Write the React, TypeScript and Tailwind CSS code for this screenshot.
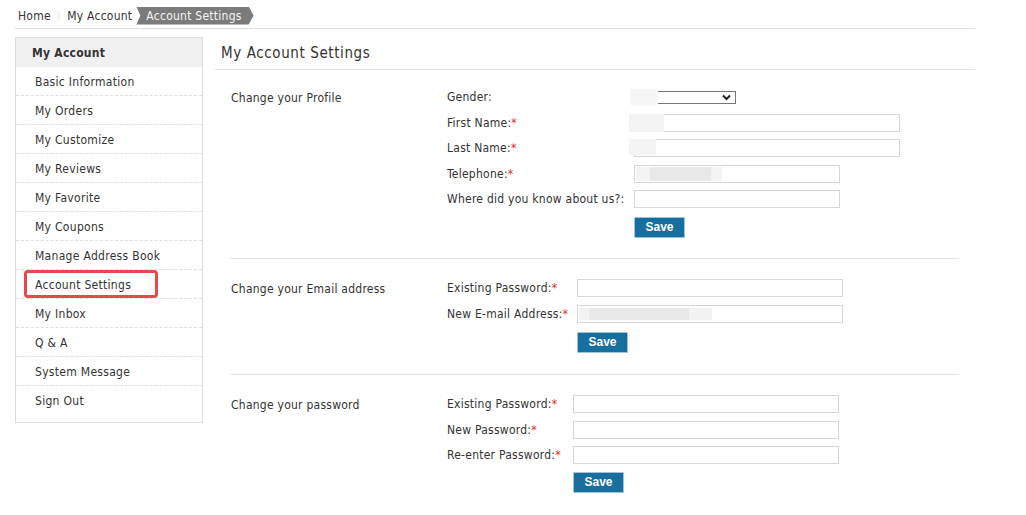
import React from "react";

const FONT = { fontFamily: '"DejaVu Sans Condensed", "DejaVu Sans", Tahoma, sans-serif' };

const sideItems = [
  "Basic Information",
  "My Orders",
  "My Customize",
  "My Reviews",
  "My Favorite",
  "My Coupons",
  "Manage Address Book",
  "Account Settings",
  "My Inbox",
  "Q & A",
  "System Message",
  "Sign Out",
];

function Star() {
  return <span className="text-[#e02b2b]">*</span>;
}

function Blur({ className }: { className: string }) {
  return <span className={"pointer-events-none absolute " + className} />;
}

function TextInput({
  w,
  children,
}: {
  w: string;
  children?: React.ReactNode;
}) {
  return (
    <div className={"relative h-[18px] " + w}>
      <input
        type="text"
        className="block h-full w-full border border-[#d6d6d6] bg-white px-1 text-[12px] outline-none"
      />
      {children}
    </div>
  );
}

function SaveBtn() {
  return (
    <button
      className="block h-[21px] w-[51px] rounded-[1px] border border-[#9fc3d8] bg-[#176f9f] text-[12px] font-bold leading-[19px] text-white"
      style={{ fontFamily: '"Liberation Sans", Arial, sans-serif' }}
    >
      Save
    </button>
  );
}

type Row = { label: React.ReactNode; field: React.ReactNode };

function Section({
  title,
  labelW,
  rows,
  pt,
  pb,
  border,
  saveGap,
}: {
  title: string;
  labelW: string;
  rows: Row[];
  pt: string;
  pb: string;
  border: boolean;
  saveGap: string;
}) {
  return (
    <div className={"mx-[15px] mr-[17px] flex " + pt + " " + pb + (border ? " border-b border-[#e3e3e3]" : "")}>
      <div className="w-[217px] pl-[1px] pt-[1px] text-[12px] leading-[18px] tracking-[0.25px] text-[#333]">{title}</div>
      <div className="flex flex-col">
        <div className="flex flex-col gap-[7.6px]">
          {rows.map((r, i) => (
            <div key={i} className="flex h-[18px] items-center">
              <div className={"shrink-0 text-[12px] leading-[18px] tracking-[0.25px] text-[#333] " + labelW}>{r.label}</div>
              {r.field}
            </div>
          ))}
        </div>
        <div className={"flex " + saveGap}>
          <div className={"shrink-0 " + labelW} />
          <SaveBtn />
        </div>
      </div>
    </div>
  );
}

export default function App() {
  return (
    <div className="min-h-[515px] w-[1026px] bg-white text-[#333]" style={FONT}>
      <div className="ml-[15px] w-[960px]">
        {/* breadcrumb */}
        <div className="flex h-[29px] items-center border-b border-[#dcdcdc] pt-[3px] text-[12px] tracking-[0.25px]">
          <span className="ml-[3px] text-[#333]">Home</span>
          <span className="ml-[5px] mr-[1px] text-[10px] text-[#b0b0b0]">〉</span>
          <span className="text-[#333]">My Account</span>
          <span
            className="ml-[4px] flex h-[18px] items-center bg-[#7b7b7b] pl-[10px] pr-[12px] text-[#f4f4f4]"
            style={{
              clipPath:
                "polygon(0 0, calc(100% - 5px) 0, 100% 50%, calc(100% - 5px) 100%, 0 100%, 4px 50%)",
            }}
          >
            Account Settings
          </span>
        </div>

        <div className="mt-[8px] flex gap-[12px]">
          {/* sidebar */}
          <div className="relative h-[386px] w-[188px] shrink-0 border border-[#dddddd]">
            <div className="flex h-[29px] items-center bg-[#f0f0f0] pl-[16px] text-[12px] font-bold tracking-[0.25px] text-[#333]">
              My Account
            </div>
            {sideItems.map((it, i) => (
              <div
                key={it}
                className={
                  "flex h-[29px] items-center pl-[19px] pt-[1px] text-[12px] tracking-[0.3px] text-[#333] " +
                  (i < sideItems.length - 1 ? "border-b border-dashed border-[#dedede]" : "")
                }
              >
                {it}
              </div>
            ))}
            <div className="pointer-events-none absolute left-[8px] top-[232px] h-[28px] w-[134px] rounded-[4px] border-[3px] border-[#e5484d]" />
          </div>

          {/* main */}
          <div className="flex-1">
            <div className="flex h-[33px] items-center border-b border-[#e3e3e3] pl-[6px] text-[15px] tracking-[0.6px] text-[#333]">
              My Account Settings
            </div>

            <Section
              title="Change your Profile"
              labelW="w-[187px]"
              pt="pt-[18px]"
              pb="pb-[20px]"
              border
              saveGap="mt-[9px]"
              rows={[
                {
                  label: "Gender:",
                  field: (
                    <div className="relative">
                      <select className="block h-[13px] w-[102px] appearance-none border border-[#767676] bg-white text-[10px] outline-none">
                        <option></option>
                      </select>
                      <svg
                        className="pointer-events-none absolute right-[5px] top-[3px]"
                        width="9"
                        height="7"
                        viewBox="0 0 9 7"
                      >
                        <path d="M1 1.5 L4.5 5 L8 1.5" stroke="#222" strokeWidth="2" fill="none" />
                      </svg>
                      <Blur className="-left-[4px] -top-[2px] h-[16px] w-[28px] bg-[#f6f6f6]" />
                    </div>
                  ),
                },
                {
                  label: (
                    <>
                      First Name:<Star />
                    </>
                  ),
                  field: (
                    <TextInput w="w-[266px]">
                      <Blur className="-left-[5px] top-0 h-[18px] w-[35px] bg-[#f4f4f4]" />
                    </TextInput>
                  ),
                },
                {
                  label: (
                    <>
                      Last Name:<Star />
                    </>
                  ),
                  field: (
                    <TextInput w="w-[266px]">
                      <Blur className="-left-[5px] top-0 h-[16px] w-[27px] bg-[#f4f4f4]" />
                    </TextInput>
                  ),
                },
                {
                  label: (
                    <>
                      Telephone:<Star />
                    </>
                  ),
                  field: (
                    <TextInput w="w-[206px]">
                      <Blur className="left-[2px] top-[2px] h-[14px] w-[86px] bg-[#f3f3f3]" />
                      <Blur className="left-[16px] top-[2px] h-[14px] w-[61px] bg-[#e8e8e8]" />
                    </TextInput>
                  ),
                },
                {
                  label: "Where did you know about us?:",
                  field: <TextInput w="w-[206px]" />,
                },
              ]}
            />

            <Section
              title="Change your Email address"
              labelW="w-[130px]"
              pt="pt-[20px]"
              pb="pb-[21px]"
              border
              saveGap="mt-[9px]"
              rows={[
                {
                  label: (
                    <>
                      Existing Password:<Star />
                    </>
                  ),
                  field: <TextInput w="w-[266px]" />,
                },
                {
                  label: (
                    <>
                      New E-mail Address:<Star />
                    </>
                  ),
                  field: (
                    <TextInput w="w-[266px]">
                      <Blur className="left-[2px] top-[3px] h-[12px] w-[133px] bg-[#f2f2f2]" />
                      <Blur className="left-[12px] top-[3px] h-[12px] w-[100px] bg-[#e9e9e9]" />
                    </TextInput>
                  ),
                },
              ]}
            />

            <Section
              title="Change your password"
              labelW="w-[126px]"
              pt="pt-[20px]"
              pb="pb-[10px]"
              border={false}
              saveGap="mt-[8px]"
              rows={[
                {
                  label: (
                    <>
                      Existing Password:<Star />
                    </>
                  ),
                  field: <TextInput w="w-[266px]" />,
                },
                {
                  label: (
                    <>
                      New Password:<Star />
                    </>
                  ),
                  field: <TextInput w="w-[266px]" />,
                },
                {
                  label: (
                    <>
                      Re-enter Password:<Star />
                    </>
                  ),
                  field: <TextInput w="w-[266px]" />,
                },
              ]}
            />
          </div>
        </div>
      </div>
    </div>
  );
}
